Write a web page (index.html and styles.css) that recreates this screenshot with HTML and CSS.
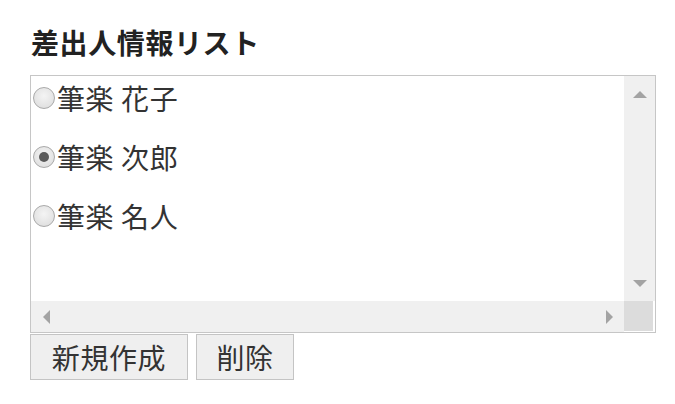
FILE: index.html
```html
<!DOCTYPE html>
<html lang="ja">
<head>
<meta charset="utf-8">
<link rel="stylesheet" href="styles.css">
</head>
<body>
<h2 class="title">差出人情報リスト</h2>
<div class="listbox">
  <div class="list-content">
    <label class="row"><input type="radio" name="sender" class="radio">筆楽 花子</label>
    <label class="row"><input type="radio" name="sender" class="radio" checked>筆楽 次郎</label>
    <label class="row"><input type="radio" name="sender" class="radio">筆楽 名人</label>
  </div>
  <div class="vscroll">
    <div class="sbtn"><span class="tri tri-up"></span></div>
    <div class="sbtn"><span class="tri tri-down"></span></div>
  </div>
  <div class="hscroll">
    <div class="sbtn-h"><span class="tri tri-left"></span></div>
    <div class="sbtn-h"><span class="tri tri-right"></span></div>
  </div>
  <div class="corner"></div>
</div>
<div class="actions">
  <button class="btn btn-new">新規作成</button>
  <button class="btn btn-del">削除</button>
</div>
</body>
</html>
```
FILE: styles.css
```css
html, body {
  margin: 0;
  padding: 0;
  background: #ffffff;
}
body {
  padding: 0 0 0 30px;
  font-family: "Noto Sans CJK JP", "Noto Sans", sans-serif;
  color: #333333;
}
.title {
  margin: 0;
  padding-top: 28px;
  padding-left: 1px;
  height: 75px;
  box-sizing: border-box;
  font-size: 28px;
  line-height: 28px;
  font-weight: bold;
  letter-spacing: 0.6px;
  color: #222222;
}
.listbox {
  width: 626px;
  height: 258px;
  box-sizing: border-box;
  border: 1px solid #c6c6c6;
  display: grid;
  grid-template-columns: 1fr 31px;
  grid-template-rows: 1fr 31px;
  background: #ffffff;
}
.list-content {
  display: flex;
  flex-direction: column;
  gap: 15px;
}
.row {
  height: 44px;
  display: flex;
  align-items: center;
  font-size: 28px;
  letter-spacing: 0.6px;
  color: #333333;
  white-space: pre;
}
.radio {
  appearance: none;
  -webkit-appearance: none;
  width: 22px;
  height: 22px;
  margin: 0 2px 0 2px;
  border-radius: 50%;
  border: 1px solid #a9a9a9;
  background: radial-gradient(circle at 50% 40%, #f4f4f4 0%, #e2e2e2 70%, #d4d4d4 100%);
  box-sizing: border-box;
  display: flex;
  align-items: center;
  justify-content: center;
}
.radio:checked::after {
  content: "";
  width: 10px;
  height: 10px;
  border-radius: 50%;
  background: #5a5a5a;
}
.vscroll {
  background: #f0f0f0;
  display: flex;
  flex-direction: column;
  justify-content: space-between;
}
.sbtn {
  height: 36px;
  display: flex;
  align-items: center;
  justify-content: center;
}
.hscroll {
  background: #f0f0f0;
  display: flex;
  justify-content: space-between;
}
.sbtn-h {
  width: 30px;
  display: flex;
  align-items: center;
  justify-content: center;
}
.corner {
  background: #dcdcdc;
  margin: 0 2px 1px 0;
}
.tri {
  width: 0;
  height: 0;
  border-style: solid;
}
.tri-up {
  border-width: 0 7px 7px 7px;
  border-color: transparent transparent #a3a3a3 transparent;
}
.tri-down {
  border-width: 7px 7px 0 7px;
  border-color: #a3a3a3 transparent transparent transparent;
}
.tri-left {
  border-width: 7px 7px 7px 0;
  border-color: transparent #a3a3a3 transparent transparent;
}
.tri-right {
  border-width: 7px 0 7px 7px;
  border-color: transparent transparent transparent #a3a3a3;
}
.actions {
  display: flex;
  gap: 8px;
  margin-top: 1px;
}
.btn {
  height: 46px;
  padding: 0;
  font-family: "Noto Sans CJK JP", "Noto Sans", sans-serif;
  font-size: 28px;
  letter-spacing: 0.6px;
  color: #333333;
  background: #efefef;
  border: 1px solid #c4c4c4;
  border-radius: 0;
  box-sizing: border-box;
  line-height: 1;
}
.btn-new {
  width: 158px;
}
.btn-del {
  width: 98px;
}
```
